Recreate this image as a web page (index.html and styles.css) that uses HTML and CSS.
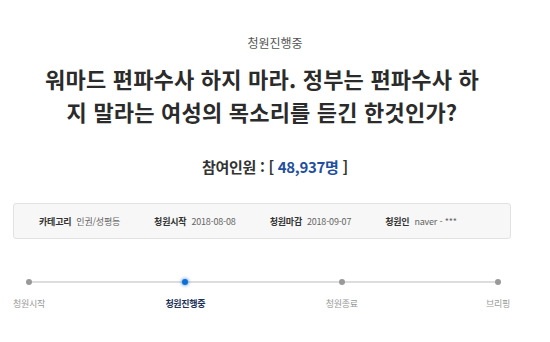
FILE: index.html
```html
<!DOCTYPE html>
<html lang="ko">
  <head>
    <meta charset="UTF-8" />
    <meta name="viewport" content="width=device-width, initial-scale=1" />
    <title>청원진행중</title>
    <link rel="stylesheet" href="styles.css">
  </head>

  <body>
    <main class="petition">
      <p class="petition-status">청원진행중</p>

      <h1 class="petition-title">워마드 편파수사 하지 마라. 정부는 편파수사 하지 말라는 여성의 목소리를 듣긴 한것인가?</h1>

      <p class="petition-count">참여인원 : [ <span class="count-num">48,937명</span> ]</p>

      <!-- petition meta info -->
      <ul class="petition-info">
        <li><strong>카테고리</strong> <span>인권/성평등</span></li>
        <li><strong>청원시작</strong> <span>2018-08-08</span></li>
        <li><strong>청원마감</strong> <span>2018-09-07</span></li>
        <li><strong>청원인</strong> <span>naver - ***</span></li>
      </ul>

      <!-- progress steps -->
      <div class="progress">
        <ol class="steps">
          <li class="step"><i class="dot"></i><span>청원시작</span></li>
          <li class="step active"><i class="dot"></i><span>청원진행중</span></li>
          <li class="step"><i class="dot"></i><span>청원종료</span></li>
          <li class="step"><i class="dot"></i><span>브리핑</span></li>
        </ol>
      </div>
    </main>
  </body>
</html>
```

FILE: styles.css
```css
:root {
  --text: #333;
  --text-sub: #666;
  --muted: #999;
  --line: #ddd;
  --blue: #1f4f9e;
  --active: #0b6fd6;
  --box-bg: #f7f7f7;
}

* {
  box-sizing: border-box;
  font-family: "Noto Sans CJK KR", "Noto Sans", sans-serif;
}

body {
  margin: 0;
  background: #fff;
  color: var(--text);
}

.petition {
  width: 498px;
  margin-left: 13px;
  padding-top: 34px;
}

/* ───────────  header text  ─────────── */
.petition-status {
  margin: 0 0 0 -13px;
  width: 550px;
  text-align: center;
  font-size: 12px;
  line-height: 18px;
  color: #555;
}

.petition-title {
  width: 452px;
  margin: 10px auto 0;
  text-align: center;
  font-size: 22px;
  font-weight: 700;
  line-height: 33px;
  letter-spacing: 0.2px;
  word-break: break-all;
  color: #2b2b2b;
}

.petition-count {
  margin: 28px 0 0 -13px;
  width: 550px;
  text-align: center;
  font-size: 15px;
  font-weight: 700;
  line-height: 22px;
  letter-spacing: -0.3px;
  color: var(--text);
}

.count-num {
  color: var(--blue);
}

/* ───────────  info box  ─────────── */
.petition-info {
  list-style: none;
  margin: 25px 0 0;
  padding: 0 0 0 25px;
  height: 36px;
  display: flex;
  align-items: center;
  gap: 34px;
  background: var(--box-bg);
  border: 1px solid #e2e2e2;
  border-radius: 3px;
  font-size: 9px;
  letter-spacing: -0.2px;
}

.petition-info li {
  display: flex;
  gap: 5px;
  white-space: nowrap;
}

.petition-info strong {
  color: var(--text);
}

.petition-info span {
  color: var(--text-sub);
}

/* ───────────  progress  ─────────── */
.progress {
  margin: 40px 13px 0 16px;
}

.steps {
  list-style: none;
  margin: 0;
  padding: 0;
  display: flex;
  justify-content: space-between;
  background: linear-gradient(var(--line), var(--line)) 0 2px / 100% 2px no-repeat;
}

.step {
  width: 0;
  display: flex;
  flex-direction: column;
  align-items: center;
  gap: 12px;
}

.dot {
  width: 6px;
  height: 6px;
  border-radius: 50%;
  background: var(--muted);
}

.step span {
  white-space: nowrap;
  font-size: 9px;
  line-height: 14px;
  letter-spacing: -0.3px;
  color: var(--muted);
}

.step.active .dot {
  background: var(--active);
  box-shadow: 0 0 3px 1px rgba(11, 111, 214, 0.45);
}

.step.active span {
  color: #22335a;
  font-weight: 700;
}
```
